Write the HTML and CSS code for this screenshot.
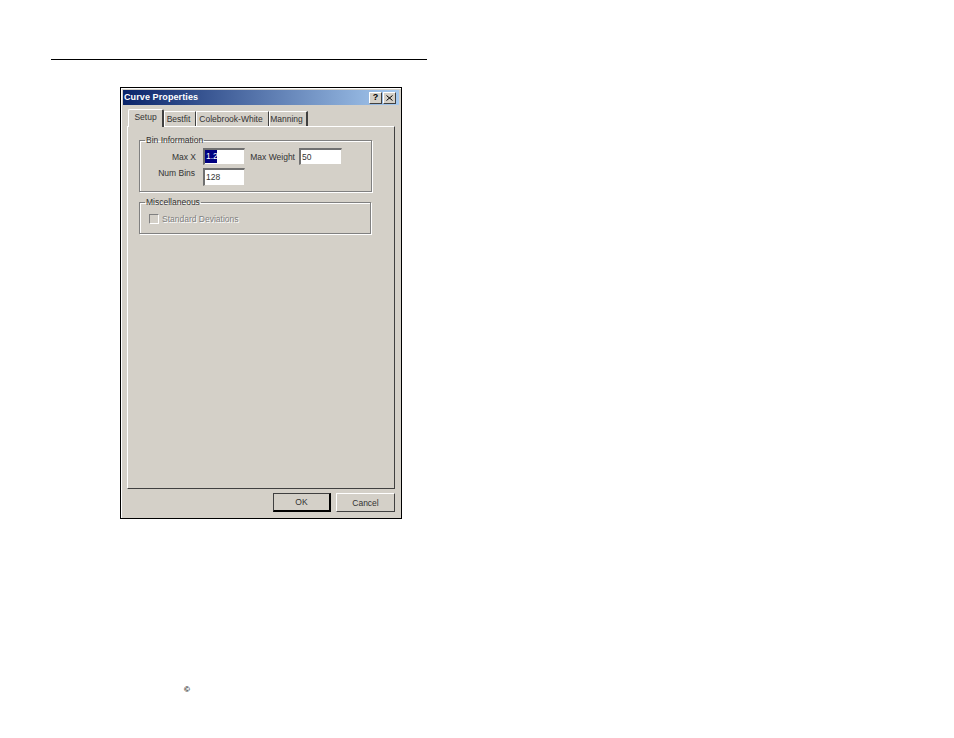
FILE: index.html
```html
<!DOCTYPE html>
<html lang="en">

<head>
  <meta charset="UTF-8">
  <title>Curve Properties</title>
  <link rel="stylesheet" href="styles.css">
</head>

<body>
  <div class="page-rule"></div>

  <div class="dialog">
    <div class="title-bar">
      <span class="title-text">Curve Properties</span>
      <span class="title-btn title-help">?</span>
      <span class="title-btn title-close">
        <svg width="7" height="6" viewBox="0 0 7 6">
          <path d="M0.500 0.500l6 5M6.500 0.500l-6 5" stroke="#000000" stroke-width="1" fill="none" />
        </svg>
      </span>
    </div>

    <div class="tabs">
      <div class="tab tab-active">Setup</div>
      <div class="tab tab-bestfit">Bestfit</div>
      <div class="tab tab-cole">Colebrook-White</div>
      <div class="tab tab-manning">Manning</div>
    </div>

    <div class="tab-page">
      <fieldset class="group group-bin">
        <legend>Bin Information</legend>
        <div class="bin-grid">
          <label class="field-label">Max X</label>
          <div class="field field-selected"><span class="selected-text">1.2</span></div>
          <label class="field-label label-weight">Max Weight</label>
          <div class="field field-weight">50</div>
          <label class="field-label label-bins">Num Bins</label>
          <div class="field">128</div>
        </div>
      </fieldset>

      <fieldset class="group group-misc">
        <legend>Miscellaneous</legend>
        <div class="check-row">
          <span class="check-box"></span>
          <span class="check-label">Standard Deviations</span>
        </div>
      </fieldset>
    </div>

    <div class="button-row">
      <button class="btn btn-default">OK</button>
      <button class="btn">Cancel</button>
    </div>
  </div>

  <div class="copyright">&copy;</div>
</body>

</html>
```

FILE: styles.css
```css
* {
  margin: 0;
  padding: 0;
  box-sizing: border-box;
}

html,
body {
  height: 738px;
  overflow: hidden;
}

body {
  background-color: #ffffff;
  font-family: "Liberation Sans", Arial, sans-serif;
  font-size: 8.5px;
  color: #333333;
  padding-top: 59px;
}

.page-rule {
  width: 376px;
  height: 1px;
  margin-left: 51px;
  background-color: #000000;
}

.dialog {
  width: 282px;
  height: 432px;
  margin-top: 27px;
  margin-left: 120px;
  padding: 2px;
  background-color: #d4d0c8;
  border: 1px solid #000000;
  box-shadow: inset 1px 1px 0 #ffffff;
}

.title-bar {
  display: flex;
  align-items: center;
  height: 15px;
  padding: 0 3px 0 1px;
  background: linear-gradient(to right, #0a246a, #a6caf0);
}

.title-text {
  flex: 1;
  padding-bottom: 2px;
  color: #ffffff;
  font-size: 9px;
  font-weight: bold;
  letter-spacing: 0.1px;
}

.title-btn {
  display: flex;
  align-items: center;
  justify-content: center;
  width: 13px;
  height: 12px;
  background-color: #d4d0c8;
  border: 1px solid #404040;
  border-top-color: #ffffff;
  border-left-color: #ffffff;
  color: #000000;
  font-size: 9px;
  font-weight: bold;
  line-height: 1;
}

.title-help {
  margin-right: 1px;
}

.tabs {
  display: flex;
  align-items: flex-end;
  height: 21px;
  padding-left: 5px;
}

.tab {
  height: 15px;
  padding-right: 3px;
  line-height: 14px;
  text-align: center;
  white-space: nowrap;
  border-top: 1px solid #ffffff;
  border-right: 1px solid #404040;
  border-left: 1px solid #ffffff;
}

.tab-active {
  position: relative;
  width: 36px;
  height: 18px;
  padding-right: 0;
  line-height: 15px;
  margin-bottom: -1px;
  background-color: #d4d0c8;
  border-right-width: 2px;
  border-radius: 2px 2px 0 0;
}

.tab-bestfit {
  width: 32px;
}

.tab-cole {
  width: 73px;
}

.tab-manning {
  width: 39px;
  border-right-width: 2px;
}

.tab-page {
  width: 268px;
  height: 363px;
  margin-left: 4px;
  padding: 8px 0 0 11px;
  border: 1px solid #404040;
  border-top-color: #ffffff;
  border-left-color: #ffffff;
}

.group {
  width: 233px;
  height: 57px;
  padding: 0 0 0 6px;
  border: 1px solid #808080;
  box-shadow: 1px 1px 0 #ffffff, inset 1px 1px 0 #ffffff;
}

.group legend {
  margin-left: -1px;
  padding: 0 1px;
  line-height: 10px;
}

.bin-grid {
  display: grid;
  grid-template-columns: 53px 42px 46px 43px;
  grid-template-rows: 17px 18px;
  row-gap: 3px;
  column-gap: 4px;
  margin-top: 3px;
  align-items: center;
}

.field-label {
  padding-right: 3px;
  text-align: right;
}

.label-weight {
  padding-right: 0;
  white-space: nowrap;
}

.label-bins {
  padding-right: 4px;
  margin-top: -9px;
}

.field {
  height: 100%;
  padding: 1px 0 0 1px;
  line-height: 13px;
  background-color: #ffffff;
  border: 1px solid #d4d0c8;
  border-top: 2px solid #707070;
  border-left: 2px solid #707070;
}

.field-selected {
  padding: 0;
}

.selected-text {
  display: inline-block;
  width: 12px;
  padding-left: 1px;
  background-color: #000080;
  color: #ffffff;
}

.group-misc {
  width: 232px;
  height: 37px;
  margin-top: 5px;
}

.check-row {
  display: flex;
  align-items: center;
  gap: 3px;
  margin-top: 7px;
  margin-left: 3px;
}

.check-box {
  width: 10px;
  height: 10px;
  border: 1px solid #808080;
  border-right-color: #ffffff;
  border-bottom-color: #ffffff;
}

.check-label {
  color: #808080;
  text-shadow: 1px 1px 0 #ffffff;
}

.button-row {
  display: flex;
  justify-content: flex-end;
  gap: 5px;
  margin-top: 4px;
  padding-right: 4px;
}

.btn {
  width: 59px;
  height: 19px;
  background-color: #d4d0c8;
  font-family: "Liberation Sans", Arial, sans-serif;
  font-size: 8.5px;
  color: #333333;
  border: 1px solid #404040;
  border-top-color: #ffffff;
  border-left-color: #ffffff;
}

.btn-default {
  width: 58px;
  border: 1px solid #404040;
  border-right: 2px solid #000000;
  border-bottom: 2px solid #000000;
}

.copyright {
  margin-top: 166px;
  margin-left: 184px;
  font-size: 8px;
  font-weight: bold;
  color: #000000;
}
```
